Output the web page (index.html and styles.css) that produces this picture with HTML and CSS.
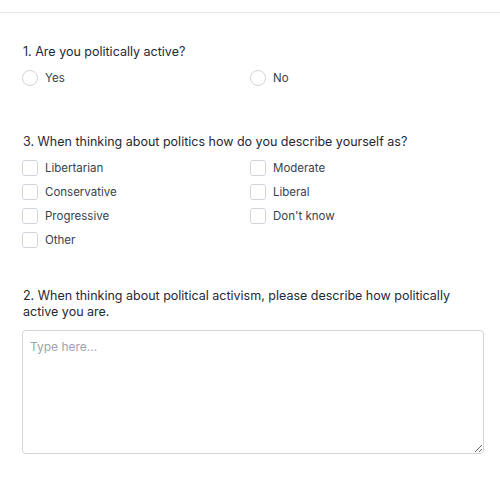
FILE: index.html
```html
<!DOCTYPE html>
<html>
<head>
<meta charset="utf-8">
<link rel="stylesheet" href="styles.css">
</head>
<body>
<div class="topbar"></div>
<form class="form">
  <section class="q q1">
    <div class="qlabel">1. Are you politically active?</div>
    <div class="opts">
      <label class="opt"><span class="radio"></span>Yes</label>
      <label class="opt"><span class="radio"></span>No</label>
    </div>
  </section>
  <section class="q q3">
    <div class="qlabel">3. When thinking about politics how do you describe yourself as?</div>
    <div class="opts">
      <label class="opt"><span class="check"></span>Libertarian</label>
      <label class="opt"><span class="check"></span>Moderate</label>
      <label class="opt"><span class="check"></span>Conservative</label>
      <label class="opt"><span class="check"></span>Liberal</label>
      <label class="opt"><span class="check"></span>Progressive</label>
      <label class="opt"><span class="check"></span>Don't know</label>
      <label class="opt"><span class="check"></span>Other</label>
    </div>
  </section>
  <section class="q q2">
    <div class="qlabel">2. When thinking about political activism, please describe how politically active you are.</div>
    <textarea class="ta" placeholder="Type here..."></textarea>
  </section>
</form>
</body>
</html>
```
FILE: styles.css
```css
html, body {
  margin: 0;
  padding: 0;
  background: #fff;
  font-family: Inter, "Noto Sans", sans-serif;
  font-size: 13px;
  color: #1f2937;
}
.topbar {
  height: 12px;
  border-bottom: 1px solid #e5e7eb;
}
.form {
  margin: 0;
  padding: 0 16px 0 22px;
}
.q1 { margin-top: 31px; }
.q3 { margin-top: 44px; }
.q2 { margin-top: 36px; }
.qlabel {
  line-height: 16px;
  color: #1f2937;
  font-size: 12.5px;
  padding-left: 1px;
}
.opts {
  display: grid;
  grid-template-columns: 228px 1fr;
  margin-top: 6px;
}
.opt {
  display: flex;
  align-items: center;
  height: 24px;
  color: #374151;
  font-size: 11.5px;
}
.radio, .check {
  box-sizing: border-box;
  width: 16px;
  height: 16px;
  border: 1px solid #d1d5db;
  background: #fff;
  margin-right: 7px;
  flex: none;
}
.radio { border-radius: 50%; }
.check { border-radius: 3px; }
.ta {
  display: block;
  box-sizing: border-box;
  width: 462px;
  height: 124px;
  margin-top: 10px;
  border: 1px solid #d1d5db;
  border-radius: 4px;
  padding: 8px 7px;
  font-family: Inter, "Noto Sans", sans-serif;
  font-size: 12px;
  color: #374151;
  resize: vertical;
  outline: none;
}
.ta::placeholder { color: #9ca3af; }
```
